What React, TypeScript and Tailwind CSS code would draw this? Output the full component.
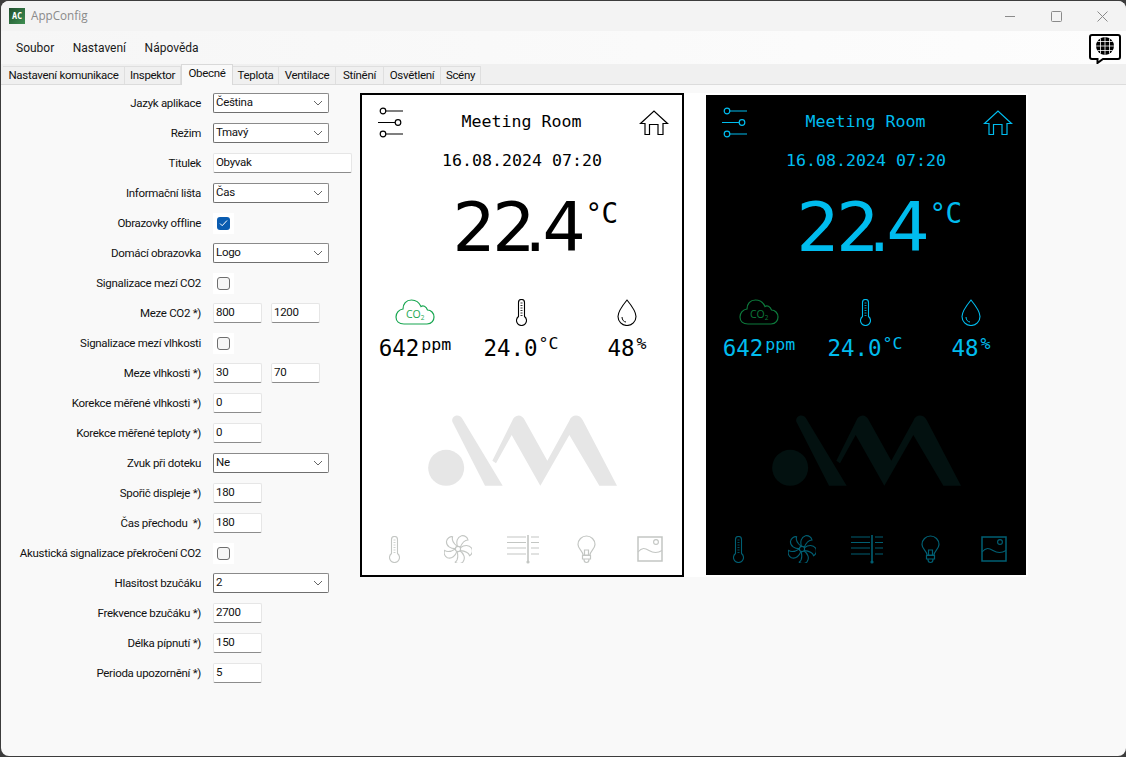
const tabs = [
  { label: "Nastavení komunikace", w: "w-[122px]" },
  { label: "Inspektor", w: "w-[56px]" },
  { label: "Obecné", w: "w-[52px]", active: true },
  { label: "Teplota", w: "w-[46px]" },
  { label: "Ventilace", w: "w-[57px]" },
  { label: "Stínění", w: "w-[48px]" },
  { label: "Osvětlení", w: "w-[57px]" },
  { label: "Scény", w: "w-[40px]" },
];

type Row =
  | { label: string; kind: "combo"; value: string }
  | { label: string; kind: "text"; value: string }
  | { label: string; kind: "check"; checked?: boolean }
  | { label: string; kind: "num"; values: string[] };

const rows: Row[] = [
  { label: "Jazyk aplikace", kind: "combo", value: "Čeština" },
  { label: "Režim", kind: "combo", value: "Tmavý" },
  { label: "Titulek", kind: "text", value: "Obyvak" },
  { label: "Informační lišta", kind: "combo", value: "Čas" },
  { label: "Obrazovky offline", kind: "check", checked: true },
  { label: "Domácí obrazovka", kind: "combo", value: "Logo" },
  { label: "Signalizace mezí CO2", kind: "check" },
  { label: "Meze CO2 *)", kind: "num", values: ["800", "1200"] },
  { label: "Signalizace mezí vlhkosti", kind: "check" },
  { label: "Meze vlhkosti *)", kind: "num", values: ["30", "70"] },
  { label: "Korekce měřené vlhkosti *)", kind: "num", values: ["0"] },
  { label: "Korekce měřené teploty *)", kind: "num", values: ["0"] },
  { label: "Zvuk při doteku", kind: "combo", value: "Ne" },
  { label: "Spořič displeje *)", kind: "num", values: ["180"] },
  { label: "Čas přechodu  *)", kind: "num", values: ["180"] },
  { label: "Akustická signalizace překročení CO2", kind: "check" },
  { label: "Hlasitost bzučáku", kind: "combo", value: "2" },
  { label: "Frekvence bzučáku *)", kind: "num", values: ["2700"] },
  { label: "Délka pípnutí *)", kind: "num", values: ["150"] },
  { label: "Perioda upozornění *)", kind: "num", values: ["5"] },
];

const Control = ({ row }: { row: Row }) => {
  if (row.kind === "combo") {
    return (
      <div className="flex h-[20px] w-[116px] items-center justify-between rounded-[2px] border border-[#8a8a8a] border-b-[#6f6f6f] border-l-[#6f6f6f] bg-white pl-[2px] pr-[5px]">
        <span>{row.value}</span>
        <svg width="10" height="6" viewBox="0 0 10 6" fill="none" stroke="#666" strokeWidth="1">
          <path d="M1 1l4 4 4-4" />
        </svg>
      </div>
    );
  }
  if (row.kind === "text") {
    return (
      <div className="flex h-[20px] w-[139px] items-center rounded-[2px] border border-[#e6e6e6] border-b-[#8c8c8c] bg-white pl-[2px]">
        {row.value}
      </div>
    );
  }
  if (row.kind === "check") {
    return (
      <div className="flex h-[21px] w-[21px] items-center justify-center bg-white">
        {row.checked ? (
          <div className="flex h-[13px] w-[13px] items-center justify-center rounded-[3px] bg-[#0a5cb0]">
            <svg width="9" height="8" viewBox="0 0 9 8" fill="none" stroke="#fff" strokeWidth="1">
              <path d="M1 4.500l2.200 2.200L8 1.500" />
            </svg>
          </div>
        ) : (
          <div className="h-[13px] w-[13px] rounded-[3px] border border-[#6e6e6e] bg-[#f6f6f6]" />
        )}
      </div>
    );
  }
  return (
    <div className="flex gap-[9px]">
      {row.values.map((v) => (
        <div
          key={v}
          className="flex h-[20px] w-[49px] items-center rounded-[2px] border border-[#e6e6e6] border-b-[#8c8c8c] bg-white pl-[2px]"
        >
          {v}
        </div>
      ))}
    </div>
  );
};

const SlidersIcon = () => (
  <svg width="27" height="31" viewBox="0 0 27 31" fill="none" stroke="currentColor" strokeWidth="1.200">
    <path d="M9 4h17M1 15.500h17M9 27h17" />
    <circle cx="6" cy="4" r="2.800" />
    <circle cx="21" cy="15.500" r="2.800" />
    <circle cx="6" cy="27" r="2.800" />
  </svg>
);

const HomeIcon = () => (
  <svg width="30" height="26" viewBox="0 0 30 26" fill="none" stroke="currentColor" strokeWidth="1.200">
    <path d="M6 13.500H1.500L15 1l13.500 12.500H24v11h-5v-10h-8.500v10H6z" />
  </svg>
);

const CloudIcon = ({ className }: { className: string }) => (
  <svg width="40" height="26" viewBox="0 0 40 26" fill="none" stroke="currentColor" strokeWidth="1.200" className={className}>
    <path d="M9 25h23c5 0 7-4 7-7 0-4-3-7-6.500-7-1.500-4-4.500-5-6.500-3.500C24 3 20 1 16.500 1 11 1 8 5 8 10c-4 .5-7 4-7 8s3 7 8 7z" />
    <text x="11" y="19" fontSize="10.500" fill="currentColor" stroke="none" fontFamily="'Open Sans', sans-serif">
      CO
      <tspan fontSize="6.500" dy="1.500">2</tspan>
    </text>
  </svg>
);

const ThermoIcon = () => (
  <svg width="11" height="27" viewBox="0 0 11 27" fill="none" stroke="currentColor" strokeWidth="1.100">
    <path d="M2.500 17.500V3.500a3 3 0 0 1 6 0v14a5 5 0 1 1-6 0z" />
    <path d="M4.500 4h2M4.500 6.500h2M4.500 9h2M4.500 11.500h2M4.500 14h2M4.500 16.500h2" strokeWidth="0.800" />
  </svg>
);

const DropIcon = () => (
  <svg width="20" height="27" viewBox="0 0 20 27" fill="none" stroke="currentColor" strokeWidth="1.100">
    <path d="M10 1S1 12 1 17.500a9 9 0 0 0 18 0C19 12 10 1 10 1z" />
    <path d="M5 18c0 3 2 5 4 5" strokeWidth="1" />
  </svg>
);

const FanIcon = () => (
  <svg width="28" height="28" viewBox="-14 -14 28 28" fill="none" stroke="currentColor" strokeWidth="1.100">
    <circle r="2.600" />
    {[0, 72, 144, 216, 288].map((a) => (
      <path key={a} transform={`rotate(${a})`} d="M-.5-2.600C-2-7-1-12 3.500-13.300c3.500-.5 6 1.800 6.500 4.300-3.500 0-6 3-7.800 7.500" />
    ))}
  </svg>
);

const BlindsIcon = () => (
  <svg width="33" height="29" viewBox="0 0 33 29" fill="none" stroke="currentColor" strokeWidth="1.200">
    <path d="M1 2h19M1 7.500h19M1 13h19M1 19h19M25 2h8M25 7.500h8M25 13h8M25 19h8" />
    <path d="M22 0v27" strokeWidth="1.600" />
    <circle cx="22" cy="27" r="1" fill="currentColor" />
  </svg>
);

const BulbIcon = () => (
  <svg width="19" height="29" viewBox="0 0 19 29" fill="none" stroke="currentColor" strokeWidth="1.200">
    <path d="M6 20c0-4-5-6-5-10.500a8.500 8.500 0 0 1 17 0C18 14 13 16 13 20z" />
    <path d="M7.500 20v-5h4v5" />
    <path d="M5.500 20.500h8v3.500h-8zM7 24.500c0 4 5 4 5 0" />
  </svg>
);

const PictureIcon = () => (
  <svg width="26" height="26" viewBox="0 0 26 26" fill="none" stroke="currentColor" strokeWidth="1.500">
    <rect x="1" y="1" width="24" height="24" />
    <path d="M1 16c4-5 7-4 11-1.500 5 3 9 2.500 13 0" strokeWidth="1.100" />
    <circle cx="19" cy="6" r="2.400" strokeWidth="1.100" />
  </svg>
);

const LogoMark = () => (
  <svg width="189" height="71" viewBox="204 73 567 213" fill="currentColor">
    <circle cx="258.500" cy="231.500" r="54" />
    <path d="M279 97c-5-8-2-17 6-21 8-3 16-1 21 7l122 202h-53z" />
    <path d="M397 210l59-118c7-22 29-24 38-4l68 122 66-120c8-20 30-20 40-2l103 197h-53l-90-152-87 152-86-152-47 85z" />
  </svg>
);

const Screen = ({ dark }: { dark?: boolean }) => {
  const main = dark ? "text-[#00bcee]" : "text-black";
  const cloud = dark ? "text-[#0d7a3c]" : "text-[#17a650]";
  const nav = dark ? "text-[#005f73]" : "text-[#c3c6c3]";
  const logo = dark ? "text-[#031110]" : "text-[#e6e6e6]";
  return (
    <div className={`flex h-[480px] w-[320px] flex-col font-['DejaVu_Sans_Mono',monospace] tracking-normal ${dark ? "bg-black" : "bg-white"} ${main}`}>
      <div className="flex h-[53px] items-start justify-between pl-[15px] pr-[13px] pt-[12px]">
        <SlidersIcon />
        <span className="mt-[2px] text-[16.600px] leading-[25px]">Meeting Room</span>
        <div className="pt-[3px]">
          <HomeIcon />
        </div>
      </div>
      <div className="h-[26px] text-center text-[16.600px] leading-[26px]">16.08.2024 07:20</div>
      <div className="flex h-[108px] items-center justify-center pl-[26px]">
        <span className="w-[133px] whitespace-nowrap font-['DejaVu_Sans',sans-serif] text-[68px] leading-none tracking-[-3.500px]">
          2<span className="tracking-[-11px]">2</span>.4
        </span>
        <span className="mb-[28px] text-[27.500px] leading-none tracking-[-0.500px]">°C</span>
      </div>
      <div className="mt-[14px] grid grid-cols-[repeat(3,106px)]">
        <div className="flex h-[32px] items-center justify-center">
          <CloudIcon className={cloud} />
        </div>
        <div className="flex h-[32px] items-center justify-center">
          <ThermoIcon />
        </div>
        <div className="flex h-[32px] items-center justify-center">
          <DropIcon />
        </div>
        <div className="flex h-[34px] items-start justify-center text-[22.500px] leading-[40px]">
          642<span className="ml-[2px] text-[16.600px] leading-[34px]">ppm</span>
        </div>
        <div className="flex h-[34px] items-start justify-center text-[22.500px] leading-[40px]">
          24.0<span className="ml-[1px] text-[16.600px] leading-[32px]">°C</span>
        </div>
        <div className="flex h-[34px] items-start justify-center text-[22.500px] leading-[40px]">
          48<span className="ml-[2px] text-[16.600px] leading-[32px]">%</span>
        </div>
      </div>
      <div className={`mt-[53px] flex justify-center ${logo}`}>
        <LogoMark />
      </div>
      <div className={`mt-[47px] grid grid-cols-5 ${nav}`}>
        {[ThermoIcon, FanIcon, BlindsIcon, BulbIcon, PictureIcon].map((Icon, i) => (
          <div key={i} className="flex h-[32px] items-center justify-center">
            <Icon />
          </div>
        ))}
      </div>
    </div>
  );
};

export default function App() {
  return (
    <div className="h-[757px] w-[1126px] overflow-hidden bg-[#3c3c3c] pl-px pt-px">
      <div className="flex h-[755px] w-[1125px] flex-col overflow-hidden rounded-lg bg-[#f9f9f9] font-['Roboto',Arial,sans-serif] text-[11.500px] tracking-[-0.3px] text-[#111]">
        <div className="flex h-[30px] items-center justify-between bg-[#f3f3f3] pl-[8px]">
          <div className="flex items-center gap-[6px]">
            <div className="flex h-[16px] w-[16px] items-center justify-center bg-gradient-to-br from-[#1f4f2d] to-[#3f8f52] font-['DejaVu_Sans_Mono',monospace] text-[8.500px] font-bold leading-none tracking-normal text-white">
              AC
            </div>
            <span className="font-['Open_Sans',sans-serif] text-[11.700px] tracking-normal text-[#8a8a8a]">AppConfig</span>
          </div>
          <div className="flex items-center gap-[35px] pr-[18px] text-[#8a8a8a]">
            <svg width="11" height="11" viewBox="0 0 11 11" stroke="currentColor" fill="none"><path d="M0 5.500h10" /></svg>
            <svg width="11" height="11" viewBox="0 0 11 11" stroke="currentColor" fill="none"><rect x=".5" y=".5" width="10" height="10" rx="1" /></svg>
            <svg width="11" height="11" viewBox="0 0 11 11" stroke="currentColor" fill="none"><path d="M.5.5l10 10M10.500.5l-10 10" /></svg>
          </div>
        </div>
        <div className="flex h-[33px] items-center justify-between bg-gradient-to-r from-[#f6f6f6] to-[#fdfdfd] pl-[15px] pr-[5px] text-[12px] tracking-normal text-[#1a1a1a]">
          <div className="flex gap-[18.500px] pt-[1px]">
            <span>Soubor</span>
            <span>Nastavení</span>
            <span>Nápověda</span>
          </div>
          <svg width="32" height="30" viewBox="0 0 32 30" className="mt-[2px]">
            <path d="M3 1h26a2 2 0 0 1 2 2v20a2 2 0 0 1-2 2H14l-5.500 4V25H3a2 2 0 0 1-2-2V3a2 2 0 0 1 2-2z" fill="#fff" stroke="#000" strokeWidth="2" />
            <circle cx="16" cy="12" r="9" fill="#000" />
            <path d="M7 12h18M8.500 7.500h15M8.500 16.500h15M16 3v18M11.500 4.500v15M20.500 4.500v15" stroke="#fff" strokeWidth="0.800" fill="none" />
          </svg>
        </div>
        <div className="flex h-[21px] items-end border-b border-[#dcdcdc] bg-[#f0f0f0] pl-[2px]">
          {tabs.map((t) => (
            <div
              key={t.label}
              className={
                t.active
                  ? `z-10 -mb-px flex h-[21px] ${t.w} items-center justify-center border border-b-0 border-[#d9d9d9] bg-[#f9f9f9] pb-[3px]`
                  : `flex h-[18px] ${t.w} items-center justify-center border-r border-t border-[#dfdfdf] bg-[#f0f0f0]`
              }
            >
              {t.label}
            </div>
          ))}
        </div>
        <div className="flex flex-1">
          <div className="w-[359px] pt-[3px]">
            {rows.map((row) => (
              <div key={row.label} className="flex h-[30px] items-center gap-[12px]">
                <label className="mt-[1px] w-[200px] whitespace-pre text-right">{row.label}</label>
                <Control row={row} />
              </div>
            ))}
          </div>
          <div className="mt-[8px] h-[484px]">
            <div className="flex h-[484px] items-center gap-[22px] bg-white pr-[2px]">
              <div className="border-2 border-black">
                <Screen />
              </div>
              <Screen dark />
            </div>
          </div>
        </div>
      </div>
    </div>
  );
}
